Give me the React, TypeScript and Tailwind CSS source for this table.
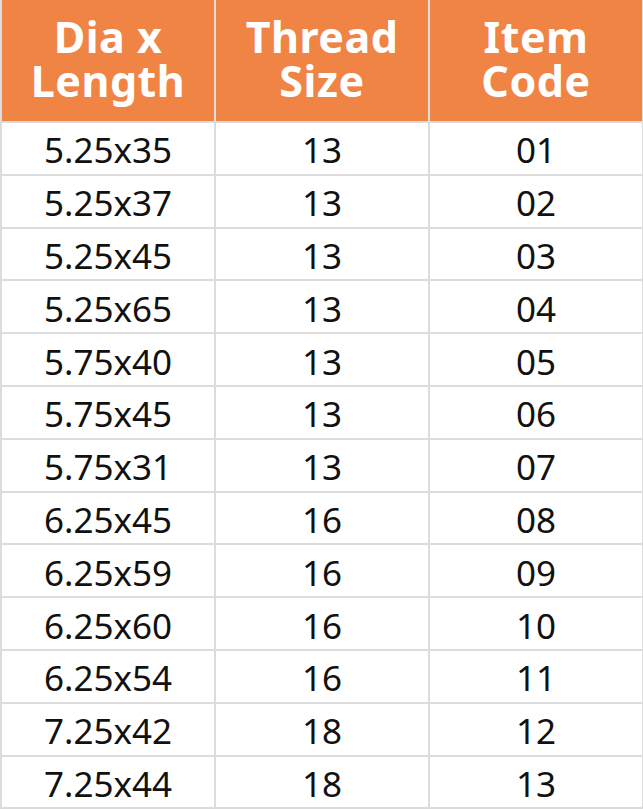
const rows: [string, string, string][] = [
  ["5.25x35", "13", "01"],
  ["5.25x37", "13", "02"],
  ["5.25x45", "13", "03"],
  ["5.25x65", "13", "04"],
  ["5.75x40", "13", "05"],
  ["5.75x45", "13", "06"],
  ["5.75x31", "13", "07"],
  ["6.25x45", "16", "08"],
  ["6.25x59", "16", "09"],
  ["6.25x60", "16", "10"],
  ["6.25x54", "16", "11"],
  ["7.25x42", "18", "12"],
  ["7.25x44", "18", "13"],
];

const headers = [
  ["Dia x", "Length"],
  ["Thread", "Size"],
  ["Item", "Code"],
];

export default function App() {
  return (
    <div className="w-[643px] h-[811px] bg-white font-['Noto_Sans',sans-serif]">
      <table className="w-[641px] border-collapse table-fixed">
        <thead>
          <tr className="h-[122px]">
            {headers.map((h) => (
              <th
                key={h[0]}
                className="bg-[#ef8445] text-white font-bold text-[43px] leading-[44px] tracking-[0.5px] border-2 border-t-0 border-[#dcdcdc] w-[214px] text-center align-middle pb-[4px]"
              >
                {h[0]}
                <br />
                {h[1]}
              </th>
            ))}
          </tr>
        </thead>
        <tbody>
          {rows.map((r) => (
            <tr key={r[2]} className="h-[52.8px]">
              {r.map((c, i) => (
                <td
                  key={i}
                  className="border-2 border-[#dcdcdc] text-center text-[35px] leading-none text-[#111] align-middle p-0 pt-[3px]"
                >
                  {c}
                </td>
              ))}
            </tr>
          ))}
        </tbody>
      </table>
    </div>
  );
}
